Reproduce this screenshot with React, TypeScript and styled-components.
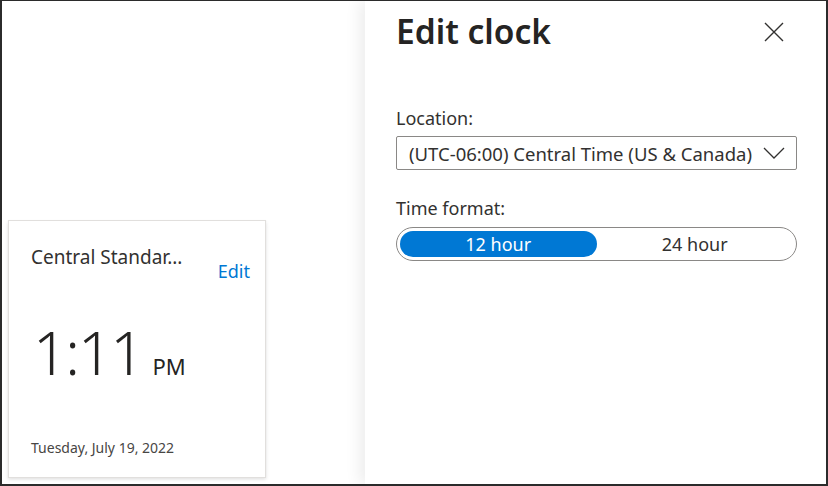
import React from "react";
import styled, { createGlobalStyle } from "styled-components";

const Global = createGlobalStyle`
  html, body { margin: 0; padding: 0; background: #ffffff; }
  body { font-family: "Noto Sans", "Open Sans", sans-serif; color: #323130; }
  * { box-sizing: border-box; }
`;

const Frame = styled.div`
  width: 828px;
  height: 486px;
  border-style: solid;
  border-color: #2b2b2b;
  border-width: 1px 2px 2px 2px;
  display: flex;
  overflow: hidden;
  background: #fff;
`;

const Stage = styled.div`
  flex: 1;
  padding: 219px 0 0 6px;
`;

const Card = styled.div`
  width: 258px;
  height: 258px;
  border: 1px solid #e1dfdd;
  box-shadow: 0 1.6px 3.6px rgba(0, 0, 0, 0.13), 0 0.3px 0.9px rgba(0, 0, 0, 0.11);
  padding: 22px 15px 20px 22px;
  display: flex;
  flex-direction: column;
`;

const CardHead = styled.div`
  display: flex;
  justify-content: space-between;
  align-items: flex-start;
`;

const Zone = styled.div`
  font-size: 19px;
  line-height: 28px;
  color: #323130;
  white-space: nowrap;
`;

const EditLink = styled.a`
  font-size: 18px;
  line-height: 24px;
  color: #0078d4;
  margin-top: 16px;
  text-decoration: none;
`;

const TimeRow = styled.div`
  display: flex;
  align-items: baseline;
  margin-top: 33px;
  padding-left: 2px;
`;

const BigTime = styled.span`
  font-size: 60px;
  line-height: 72px;
  font-weight: 300;
  color: #252423;
  letter-spacing: -2px;
`;

const Meridiem = styled.span`
  font-size: 22px;
  margin-left: 10px;
  color: #252423;
`;

const DateText = styled.div`
  margin-top: auto;
  font-size: 14px;
  line-height: 18px;
  color: #484644;
`;

const Panel = styled.div`
  width: 461px;
  height: 100%;
  background: #fff;
  box-shadow: -6px 0 14px rgba(0, 0, 0, 0.07);
  padding: 7px 29px 0 31px;
  display: flex;
  flex-direction: column;
`;

const PanelHead = styled.div`
  display: flex;
  justify-content: space-between;
  align-items: center;
`;

const Title = styled.h1`
  margin: 0;
  font-size: 33.5px;
  line-height: 46px;
  font-weight: 600;
  color: #252423;
`;

const CloseBtn = styled.button`
  border: none;
  background: none;
  padding: 0;
  width: 24px;
  height: 24px;
  margin-right: 11px;
  margin-top: 2px;
  display: flex;
  align-items: center;
  justify-content: center;
  cursor: pointer;
`;

const Label = styled.div<{ $top: number }>`
  font-size: 18px;
  line-height: 24px;
  color: #323130;
  margin-top: ${(p) => p.$top}px;
`;

const Select = styled.div`
  margin-top: 6px;
  height: 34px;
  border: 1px solid #8a8886;
  border-radius: 2px;
  display: flex;
  align-items: center;
  justify-content: space-between;
  padding: 0 11px 0 12px;
  font-size: 18.5px;
  color: #323130;
`;

const Toggle = styled.div`
  margin-top: 7px;
  height: 34px;
  border: 1px solid #8a8886;
  border-radius: 17px;
  display: flex;
  padding: 3px;
`;

const Option = styled.div<{ $active?: boolean }>`
  flex: 1;
  border-radius: 13px;
  display: flex;
  align-items: center;
  justify-content: center;
  font-size: 18px;
  background: ${(p) => (p.$active ? "#0078d4" : "transparent")};
  color: ${(p) => (p.$active ? "#ffffff" : "#323130")};
`;

export default function App() {
  return (
    <>
      <Global />
      <Frame>
        <Stage>
          <Card>
            <CardHead>
              <Zone>Central Standar...</Zone>
              <EditLink>Edit</EditLink>
            </CardHead>
            <TimeRow>
              <BigTime>1:11</BigTime>
              <Meridiem>PM</Meridiem>
            </TimeRow>
            <DateText>Tuesday, July 19, 2022</DateText>
          </Card>
        </Stage>
        <Panel>
          <PanelHead>
            <Title>Edit clock</Title>
            <CloseBtn aria-label="Close">
              <svg width="20" height="20" viewBox="0 0 20 20">
                <path d="M1 1 L19 19 M19 1 L1 19" stroke="#323130" strokeWidth="1.4" fill="none" />
              </svg>
            </CloseBtn>
          </PanelHead>
          <Label $top={52}>Location:</Label>
          <Select>
            <span>(UTC-06:00) Central Time (US &amp; Canada)</span>
            <svg width="22" height="12" viewBox="0 0 22 12">
              <path d="M1 1 L11 11 L21 1" stroke="#323130" strokeWidth="1.3" fill="none" />
            </svg>
          </Select>
          <Label $top={26}>Time format:</Label>
          <Toggle>
            <Option $active>12 hour</Option>
            <Option>24 hour</Option>
          </Toggle>
        </Panel>
      </Frame>
    </>
  );
}
